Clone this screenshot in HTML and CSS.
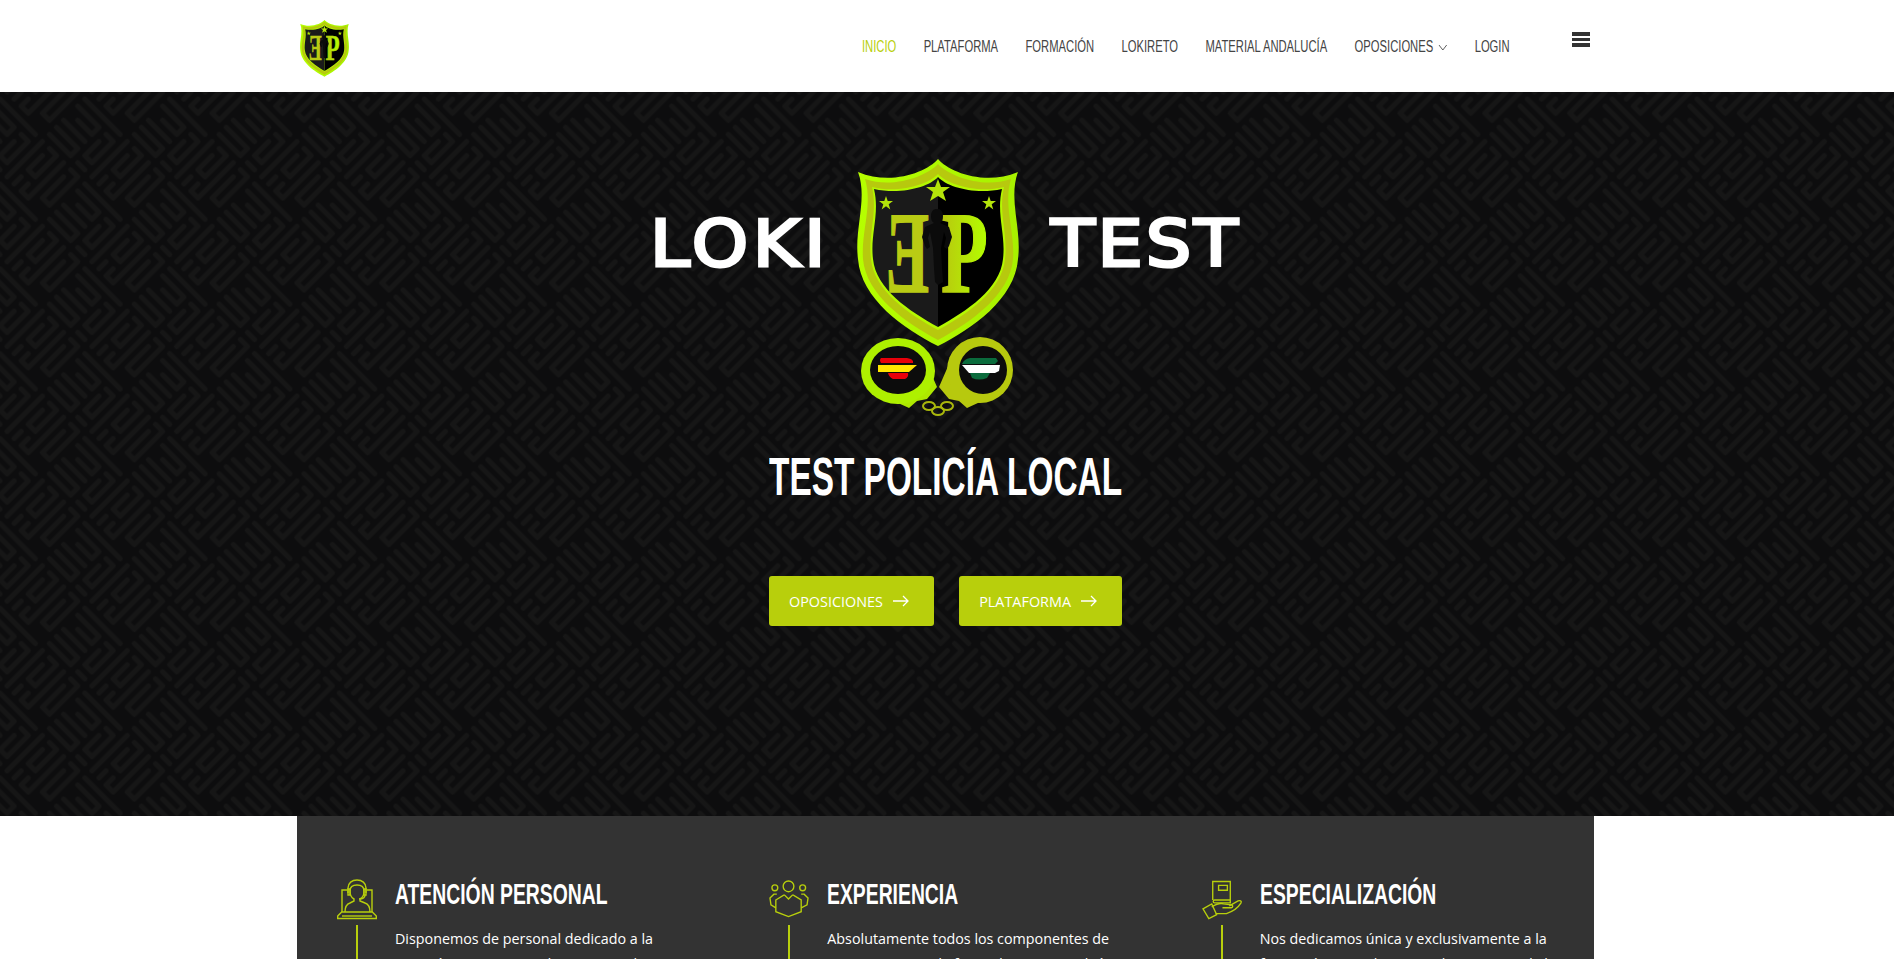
FILE: index.html
```html
<!DOCTYPE html>
<html lang="es">

<head>
    <meta charset="UTF-8">
    <meta name="viewport" content="width=device-width, initial-scale=1.0">
    <link rel="stylesheet" href="styles.css">
    <title>Test Policía Local</title>
</head>

<body>
    <svg class="defs" width="0" height="0" aria-hidden="true">
        <defs>
            <linearGradient id="lime" x1="0" y1="0" x2="1" y2="0">
                <stop offset="0" stop-color="#b6ff00"/>
                <stop offset="1" stop-color="#a8f000"/>
            </linearGradient>
            <linearGradient id="letter-p" x1="0" y1="0" x2="1" y2="0">
                <stop offset="0" stop-color="#b8c70f"/>
                <stop offset="1" stop-color="#b4ff00"/>
            </linearGradient>
            <symbol id="shield" viewBox="0 0 162 188">
                <path fill="url(#lime)" d="M81 0C92 13 128 27 161 13C151 40 165 70 161 100C158 140 115 170 81 187C47 170 4 140 1 100C-3 70 11 40 1 13C34 27 70 13 81 0Z"/>
                <path fill="#b7c90e" d="M81 5C92 17 126 30 154 20C146 46 158 72 156 100C153 136 113 164 81 181C49 164 9 136 6 100C4 72 16 46 8 20C36 30 70 17 81 5Z"/>
                <path fill="#b4f800" d="M81 15C90 25 120 35 147 28C141 53 151 74 148 100C145 132 110 155 81 171C52 155 17 132 14 100C11 74 21 53 15 28C42 35 72 25 81 15Z"/>
                <path fill="#000" d="M81 18C90 28 118 36 145 30C139 55 149 75 146 100C143 130 110 152 81 168Z"/>
                <path fill="#1a1a1a" d="M81 18C72 28 44 36 17 30C23 55 13 75 16 100C19 130 52 152 81 168Z"/>
                <g fill="#b4e40a">
                    <path d="M81 20l3 8h9l-7 5 3 9-8-5-8 5 3-9-7-5h9z"/>
                    <path d="M29 37l1.700 5h5.300l-4.300 3.200 1.600 5.200-4.300-3.200-4.300 3.200 1.600-5.200-4.300-3.200h5.300z"/>
                    <path d="M132 37l1.700 5h5.300l-4.300 3.200 1.600 5.200-4.300-3.200-4.300 3.200 1.600-5.200-4.300-3.200h5.300z"/>
                </g>
                <text class="logo-letter" transform="translate(72 133) scale(-0.56 1)" fill="#b9cb14" stroke="#b9cb14" stroke-width="1.500">E</text>
                <text class="logo-letter" transform="translate(84 133) scale(0.66 1)" fill="url(#letter-p)" stroke="url(#letter-p)" stroke-width="1.500">P</text>
                <path fill="#0b0b0b" d="M81 50c3 0 5 3 5 7s-1 6-3 7l9 4 3 10-3 9-2 3-3-2 2-9-2-6-3 16 1 20 1 14-5 3-3-3-1-14-1-20-3-16-2 6 2 9-3 2-2-3-3-9 3-10 9-4c-2-1-3-3-3-7s2-7 5-7z"/>
            </symbol>
            <g id="maze-h">
                <path d="M5 5H55M5 15H35V25H15M45 15H55V45H45V25M5 35H35M5 45H35V55H5M45 55H55"/>
            </g>
            <g id="maze-v">
                <path d="M5 5V55M15 5H25V35H15V15M35 5V55H25V45M45 5H55V45H45V15M15 45V55"/>
            </g>
            <pattern id="maze" width="120" height="120" patternUnits="userSpaceOnUse" patternTransform="rotate(45)">
                <g fill="none" stroke="#161616" stroke-width="5" stroke-linecap="round" stroke-linejoin="round">
                    <use href="#maze-h"/>
                    <use href="#maze-v" x="60"/>
                    <use href="#maze-v" y="60"/>
                    <use href="#maze-h" x="60" y="60"/>
                </g>
            </pattern>
        </defs>
    </svg>

    <div class="page">
        <header class="site-header">
            <div class="container header-row">
                <a class="brand" href="#"><svg class="brand-logo"><use href="#shield"/></svg></a>
                <nav class="main-nav">
                    <a class="nav-link active" href="#">Inicio</a>
                    <a class="nav-link" href="#">Plataforma</a>
                    <a class="nav-link" href="#">Formación</a>
                    <a class="nav-link" href="#">Lokireto</a>
                    <a class="nav-link" href="#">Material Andalucía</a>
                    <a class="nav-link" href="#">Oposiciones
                        <svg class="chevron" viewBox="0 0 13 7"><path d="M1 1l5.500 5 5.500-5"/></svg>
                    </a>
                    <a class="nav-link" href="#">Login</a>
                </nav>
                <button class="burger" aria-label="Menu"><span></span><span></span><span></span></button>
            </div>
        </header>

        <section class="hero">
            <svg class="hero-bg" width="100%" height="100%"><rect width="100%" height="100%" fill="url(#maze)"/></svg>

            <div class="hero-inner">
                <div class="hero-brand">
                    <span class="brand-word word-left">LOKI</span>
                    <svg class="hero-logo" viewBox="0 0 162 258">
                        <!-- handcuffs go behind the shield -->
                        <g>
                            <path fill="#aee800" d="M70 205L80 228 70 240 60 242 52 249 28 238Z"/>
                            <path fill="#b7c90e" d="M92 205L82 228 92 240 102 242 110 249 134 238Z"/>
                            <ellipse cx="41" cy="212" rx="37" ry="33" fill="#aef000"/>
                            <ellipse cx="123" cy="211" rx="33" ry="33" fill="#b7c90e"/>
                            <ellipse cx="41" cy="211" rx="28" ry="24" fill="#0c0c0c"/>
                            <ellipse cx="126" cy="211" rx="24" ry="24" fill="#0c0c0c"/>
                            <g fill="none" stroke="#a9b70c" stroke-width="2">
                                <ellipse cx="72" cy="247" rx="6" ry="4"/>
                                <ellipse cx="81" cy="252" rx="6" ry="4"/>
                                <ellipse cx="90" cy="247" rx="6" ry="4"/>
                            </g>
                            <path fill="#e8000a" d="M24 199h26q7 1 6 5l-32 0q-2-3 0-5zM31 214h20q1 4-3 6H36q-4-2-5-6z"/>
                            <path fill="#ffe600" d="M21 206h39l-8 7H21z"/>
                            <path fill="#0a6b3c" d="M113 199h26l2 3-3 3h-33q2-5 8-6zM113 214h20l-3 5q-8 3-15 0z"/>
                            <path fill="#fff" d="M105 206h38l-1 6-4 2h-26z"/>
                        </g>
                        <use href="#shield" width="162" height="188"/>
                    </svg>
                    <span class="brand-word word-right">TEST</span>
                </div>

                <div class="hero-main">
                    <h1 class="hero-title">TEST POLICÍA LOCAL</h1>
                    <div class="hero-actions">
                        <a class="btn" href="#">Oposiciones
                            <svg class="arrow" viewBox="0 0 16 12"><path d="M0 6h15M10 1l5 5-5 5"/></svg>
                        </a>
                        <a class="btn" href="#">Plataforma
                            <svg class="arrow" viewBox="0 0 16 12"><path d="M0 6h15M10 1l5 5-5 5"/></svg>
                        </a>
                    </div>
                </div>
            </div>
        </section>

        <section class="container features">
            <article class="feature">
                <div class="feature-side">
                    <svg class="feature-icon" viewBox="0 0 40 40">
                        <path d="M5 32V10h5M30 10h5v22"/>
                        <path d="M0.700 36l4-4h30.600l4 4v2.500H0.700z"/>
                        <path d="M5 36h30"/>
                        <path d="M8 32c0-6 2-8 5-9l4-2v-2c-2-1-4-4-4-8 0-4 3-6 7-6s7 2 7 6c0 4-2 7-4 8v2l5 2c3 1 5 3 5 9"/>
                        <path d="M11 13V8c0-5 4-8 9-8s9 3 9 8v5"/>
                        <path d="M11 9h2v6h-2zM27 9h2v6h-2z"/>
                        <path d="M28 15c0 3-3 4-6 4"/>
                    </svg>
                    <span class="feature-line"></span>
                </div>
                <div class="feature-body">
                    <h2 class="feature-title">Atención personal</h2>
                    <p class="feature-text">Disponemos de personal dedicado a la atención permanente de nuestros alumnos</p>
                </div>
            </article>

            <article class="feature">
                <div class="feature-side">
                    <svg class="feature-icon" viewBox="0 0 41 40">
                        <circle cx="20" cy="6" r="5.500"/>
                        <circle cx="6" cy="7.500" r="3"/>
                        <circle cx="34.500" cy="7.500" r="3"/>
                        <path d="M7 20l8-5h1l4 4 4-4h1l8 5v12l-13 5-13-5z"/>
                        <path d="M7 28l-5-3-1-7 4-4h3"/>
                        <path d="M33 28l6-3 1-7-4-4h-3"/>
                    </svg>
                    <span class="feature-line"></span>
                </div>
                <div class="feature-body">
                    <h2 class="feature-title">Experiencia</h2>
                    <p class="feature-text">Absolutamente todos los componentes de nuestro equipo de formadores, son Policías</p>
                </div>
            </article>

            <article class="feature">
                <div class="feature-side">
                    <svg class="feature-icon" viewBox="0 0 41 40">
                        <path d="M11 20V1h18v22H13c-2 0-2-3 0-3h16"/>
                        <path d="M17 5h9v5h-9z"/>
                        <path d="M1 29l9-5 5 11-8 4z"/>
                        <path d="M10 27c5-3 9-4 12-3l8 1c2 0 2 3 0 3h-9"/>
                        <path d="M28 26l9-5c2-1 4 0 3 2-3 5-9 9-15 11l-11 0"/>
                    </svg>
                    <span class="feature-line"></span>
                </div>
                <div class="feature-body">
                    <h2 class="feature-title">Especialización</h2>
                    <p class="feature-text">Nos dedicamos única y exclusivamente a la formación para el acceso a los Cuerpos de la</p>
                </div>
            </article>
        </section>
    </div>
</body>

</html>
```
FILE: styles.css
```css
html,
body {
    margin: 0;
    padding: 0;
}

body {
    font-family: "Open Sans", sans-serif;
    background: #fff;
    color: #333;
}

.defs {
    display: block;
    height: 0;
}

.page {
    height: 100vh;
    overflow: hidden;
}

.container {
    width: 1297px;
    margin-left: 297px;
}

/* header */
.site-header {
    height: 92px;
    background: #fff;
}

.header-row {
    display: flex;
    height: 100%;
}

.brand {
    display: block;
    margin: 20px 0 0 3px;
}

.brand-logo {
    display: block;
    width: 49px;
    height: 57px;
}

/* no condensed font here, so the whole nav is squeezed sideways */
.main-nav {
    display: flex;
    gap: 39px;
    margin-left: auto;
    margin-top: 36px;
    height: 22px;
    transform: scaleX(0.702);
    transform-origin: right center;
}

.nav-link {
    display: flex;
    align-items: center;
    gap: 7px;
    font-family: "Liberation Sans", sans-serif;
    font-size: 16px;
    text-transform: uppercase;
    text-decoration: none;
    white-space: nowrap;
    color: #444;
}

.nav-link.active {
    color: #b8cf0c;
}

.chevron {
    width: 13px;
    height: 7px;
    fill: none;
    stroke: #444;
    stroke-width: 1;
}

.burger {
    display: flex;
    flex-direction: column;
    gap: 2px;
    flex: none;
    width: 18px;
    height: 15px;
    margin: 32px 4px 0 62px;
    padding: 0;
    border: none;
    background: none;
}

.burger span {
    display: block;
    height: 3.700px;
    background: #333;
}

/* hero */
.hero {
    position: relative;
    height: 724px;
    background: #0d0d0e;
    overflow: hidden;
}

.hero-bg {
    position: absolute;
    inset: 0;
}

.hero-inner {
    position: relative;
    width: 1891px;
}

.hero-brand {
    display: flex;
    justify-content: center;
    height: 258px;
    padding-top: 67px;
}

.hero-logo {
    display: block;
    flex: none;
    width: 162px;
    height: 258px;
    margin: 0 29px 0 36px;
}

.logo-letter {
    font-family: "Liberation Serif", serif;
    font-weight: 700;
    font-size: 116px;
}

/* regular weight plus a stroke gets closer to the blocky logo letters */
.brand-word {
    flex: none;
    font-family: "DejaVu Sans", sans-serif;
    font-weight: 400;
    font-size: 64px;
    line-height: 64px;
    margin-top: 53px;
    color: #fff;
    -webkit-text-stroke: 3px #fff;
    transform: scaleX(1.12);
    transform-origin: left center;
}

.word-left {
    width: 171px;
    margin-left: -3px;
    letter-spacing: 4px;
}

.word-right {
    width: 188px;
    margin-left: 3px;
    letter-spacing: 2.500px;
}

.hero-main {
    width: 353px;
    margin: 0 auto;
}

.hero-title {
    margin: 29px 0 0;
    font-family: "Liberation Sans", sans-serif;
    font-size: 53px;
    line-height: 62px;
    font-weight: 700;
    color: #fff;
    white-space: nowrap;
    transform: scaleX(0.63);
    transform-origin: left center;
}

.hero-actions {
    display: flex;
    justify-content: space-between;
    margin-top: 68px;
}

.btn {
    display: flex;
    align-items: center;
    justify-content: space-between;
    box-sizing: border-box;
    min-width: 162px;
    height: 50px;
    padding: 0 25px 0 20px;
    border-radius: 3px;
    background: #b8cf0c;
    color: #fff;
    font-size: 14.400px;
    text-transform: uppercase;
    text-decoration: none;
}

.arrow {
    width: 16px;
    height: 12px;
    margin-left: 10px;
    fill: none;
    stroke: #fff;
    stroke-width: 1.300;
}

/* features */
.features {
    display: grid;
    grid-template-columns: repeat(3, 1fr);
    height: 300px;
    background: #333;
    color: #fff;
}

.feature {
    display: flex;
    gap: 18px;
    padding: 64px 0 0 40px;
}

.feature-side {
    display: flex;
    flex-direction: column;
    align-items: center;
    width: 40px;
    flex: none;
}

.feature-icon {
    display: block;
    width: 40px;
    height: 40px;
    fill: none;
    stroke: #b8cf0c;
    stroke-width: 1.400;
    overflow: visible;
}

.feature-line {
    width: 2px;
    height: 200px;
    margin-top: 5px;
    background: #b8cf0c;
}

.feature-body {
    width: 300px;
}

.feature-title {
    margin: 0;
    font-family: "Liberation Sans", sans-serif;
    font-size: 30px;
    line-height: 28px;
    font-weight: 700;
    text-transform: uppercase;
    white-space: nowrap;
    transform: scaleX(0.645);
    transform-origin: left center;
}

.feature-text {
    margin: 18px 0 0;
    font-size: 14.300px;
    line-height: 25px;
}
```
